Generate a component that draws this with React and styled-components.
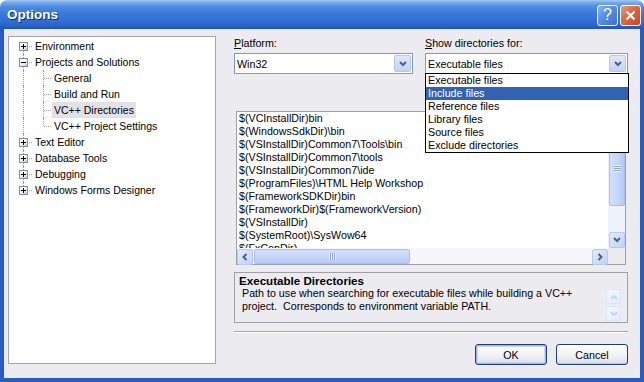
import React from 'react';
import styled, { createGlobalStyle } from 'styled-components';

const GlobalStyle = createGlobalStyle`
  body {
    margin: 0;
    background: #ffffff;
    font-family: "Liberation Sans", Arial, sans-serif;
    font-size: 10.7px;
    color: #000;
  }
`;

const dialogBg = '#ECEBF0';

// window frame
const Window = styled.div`
  width: 644px;
  height: 382px;
  display: flex;
  flex-direction: column;
  border-radius: 7px 7px 0 0;
  overflow: hidden;
`;

const TitleBar = styled.div`
  height: 29px;
  flex: none;
  display: flex;
  align-items: center;
  padding: 0 3px 0 7px;
  background: linear-gradient(
    #a6c8f3 0%,
    #79acec 8%,
    #4f8ee2 22%,
    #3a7ad9 45%,
    #3170d4 70%,
    #2a63c9 88%,
    #2252b6 100%
  );
`;

const Title = styled.div`
  flex: 1;
  color: #fff;
  font-weight: bold;
  font-size: 13.5px;
  text-shadow: 1px 1px 0 #0c2a7a;
`;

const CapButtons = styled.div`
  display: flex;
  gap: 2px;
  margin-top: 1px;
`;

const CapButton = styled.div`
  width: 21px;
  height: 21px;
  box-sizing: border-box;
  border: 1px solid #fff;
  border-radius: 3px;
  display: flex;
  align-items: center;
  justify-content: center;
  color: #fff;
  font-size: 16px;
  background: ${(p) =>
    p.$kind === 'close'
      ? 'linear-gradient(135deg, #ee9a7c 0%, #e06a43 40%, #c9461f 100%)'
      : 'linear-gradient(135deg, #8cb6f2 0%, #5a90e6 40%, #3a6fd6 100%)'};
`;

const Frame = styled.div`
  flex: 1;
  display: flex;
  border: 4px solid #2a5bc4;
  border-top: 0;
  box-shadow: inset 1px 0 0 #5d8be0, inset -1px 0 0 #5d8be0;
`;

const Client = styled.div`
  flex: 1;
  display: flex;
  align-items: flex-start;
  background: ${dialogBg};
  padding: 7px 12px 0 4px;
`;

// tree
const TreePanel = styled.div`
  width: 208px;
  height: 328px;
  box-sizing: border-box;
  border: 1px solid #a5a5a8;
  background: #fff;
  padding: 1px 0 0 5px;
  font-size: 10.5px;
`;

const TreeRow = styled.div`
  display: flex;
  align-items: center;
  height: 16px;
`;

const Gutter = styled.span`
  position: relative;
  flex: none;
  width: 19px;
  height: 16px;
  &::before {
    content: '';
    position: absolute;
    left: ${(p) => p.$x}px;
    top: ${(p) => p.$from}px;
    bottom: ${(p) => p.$to}px;
    border-left: 1px dotted #a0a0a0;
  }
  &::after {
    content: '';
    display: ${(p) => (p.$branch ? 'block' : 'none')};
    position: absolute;
    left: ${(p) => p.$x + 1}px;
    right: 1px;
    top: 8px;
    border-top: 1px dotted #a0a0a0;
  }
`;

const Expander = styled.span`
  position: absolute;
  left: 5px;
  top: 4px;
  width: 9px;
  height: 9px;
  box-sizing: border-box;
  border: 1px solid #7a8ea6;
  background: linear-gradient(135deg, #ffffff 35%, #cfcbc2 100%);
  z-index: 1;
  &::before {
    content: '';
    position: absolute;
    left: 1px;
    top: 3px;
    width: 5px;
    height: 1px;
    background: #000;
  }
  &::after {
    content: '';
    display: ${(p) => (p.$open ? 'none' : 'block')};
    position: absolute;
    left: 3px;
    top: 1px;
    width: 1px;
    height: 5px;
    background: #000;
  }
`;

const TreeLabel = styled.span`
  height: 16px;
  line-height: 16px;
  padding: 0 2px;
  white-space: nowrap;
  background: ${(p) => (p.$selected ? '#e2e1e6' : 'transparent')};
`;

// right side
const Main = styled.div`
  width: 394px;
  margin-left: 18px;
  display: flex;
  flex-direction: column;
  padding-top: 1px;
`;

const ComboRow = styled.div`
  display: flex;
  gap: 12px;
`;

const Field = styled.div`
  width: ${(p) => p.$w}px;
  display: flex;
  flex-direction: column;
`;

const Label = styled.div`
  height: 13px;
  line-height: 13px;
  margin-bottom: 3px;
`;

const Combo = styled.div`
  position: relative;
  height: 21px;
  box-sizing: border-box;
  border: 1px solid #7f9db9;
  background: #fff;
  display: flex;
  align-items: center;
`;

const ComboText = styled.div`
  flex: 1;
  padding-left: 2px;
`;

const DropButton = styled.div`
  width: 17px;
  height: 17px;
  margin: 1px;
  box-sizing: border-box;
  border: 1px solid #b4c7f1;
  border-radius: 2px;
  background: linear-gradient(#dfe8fd, #c3d3f8);
  display: flex;
  align-items: center;
  justify-content: center;
`;

const DropList = styled.div`
  position: absolute;
  top: 19px;
  left: -1px;
  right: -2px;
  border: 1px solid #000;
  background: #fff;
  z-index: 5;
`;

const DropItem = styled.div`
  height: 13px;
  line-height: 13px;
  padding-left: 2px;
  background: ${(p) => (p.$active ? '#3163b3' : 'transparent')};
  color: ${(p) => (p.$active ? '#fff' : '#000')};
`;

const DirList = styled.div`
  margin: 37px 2px 0;
  height: 154px;
  box-sizing: border-box;
  border: 1px solid #a0a0a4;
  background: #fff;
  display: grid;
  grid-template-columns: 1fr 17px;
  grid-template-rows: 1fr 16px;
`;

const DirLines = styled.div`
  overflow: hidden;
  padding-left: 2px;
  white-space: nowrap;
`;

const DirLine = styled.div`
  height: 13px;
  line-height: 13px;
`;

const VScroll = styled.div`
  display: flex;
  flex-direction: column;
  background: #eef2fb;
  padding-left: 1px;
`;

const HScroll = styled.div`
  display: flex;
  background: #f6f7fc;
  padding-top: 1px;
`;

const Corner = styled.div`
  background: ${dialogBg};
`;

const ArrowButton = styled.div`
  flex: none;
  width: 16px;
  height: 16px;
  box-sizing: border-box;
  border: 1px solid #b7c9f0;
  border-radius: 2px;
  background: linear-gradient(135deg, #e4ecfd, #c0d1f7);
  display: flex;
  align-items: center;
  justify-content: center;
`;

const Thumb = styled.div`
  flex: none;
  box-sizing: border-box;
  border: 1px solid #a9bfee;
  border-radius: 2px;
  display: flex;
  align-items: center;
  justify-content: center;
  ${(p) =>
    p.$vertical
      ? `width: 16px; height: 76px; margin-top: 2px;
         background: linear-gradient(90deg, #d4e0fc, #c4d4fa 60%, #b5c8f5);`
      : `width: 156px; height: 15px; margin-left: 1px;
         background: linear-gradient(#d4e0fc, #c4d4fa 60%, #b5c8f5);`}
`;

const Grip = styled.span`
  display: block;
  ${(p) =>
    p.$vertical
      ? `width: 7px; height: 7px;
         background: repeating-linear-gradient(#eef3ff 0 1px, #8fa8dc 1px 2px);`
      : `width: 7px; height: 7px;
         background: repeating-linear-gradient(90deg, #eef3ff 0 1px, #8fa8dc 1px 2px);`}
`;

const Track = styled.div`
  flex: 1;
`;

const DescBox = styled.div`
  margin-top: 7px;
  height: 51px;
  box-sizing: border-box;
  border: 1px solid #a0a0a4;
  padding: 1px 6px 0 4px;
  display: flex;
  flex-direction: column;
`;

const DescTitle = styled.div`
  font-weight: bold;
  font-size: 11.6px;
  height: 13px;
  line-height: 13px;
`;

const DescBody = styled.div`
  display: flex;
`;

const DescText = styled.div`
  flex: 1;
  margin-left: 3px;
  line-height: 13px;
  white-space: pre;
`;

const Spinner = styled.div`
  display: flex;
  flex-direction: column;
  gap: 2px;
  margin-top: 2px;
`;

const SpinButton = styled.div`
  width: 15px;
  height: 15px;
  box-sizing: border-box;
  border: 1px solid #dde6f7;
  border-radius: 2px;
  background: linear-gradient(135deg, #f4f7fe, #e3eafa);
  display: flex;
  align-items: center;
  justify-content: center;
`;

const Separator = styled.div`
  margin-top: 8px;
  border-top: 1px solid #aca899;
  border-bottom: 1px solid #fff;
`;

const ButtonRow = styled.div`
  margin-top: 11px;
  display: flex;
  justify-content: flex-end;
  gap: 9px;
`;

const Button = styled.div`
  width: 72px;
  height: 21px;
  box-sizing: border-box;
  border: 1px solid #1f3d78;
  border-radius: 3px;
  background: linear-gradient(#ffffff 0%, #f3f3f6 50%, #e3e4ec 85%, #d3d6e4 100%);
  box-shadow: ${(p) =>
    p.$default
      ? 'inset 0 0 0 1px #9cb7ec, inset 0 0 0 2px #c6d6f6'
      : 'inset 0 -1px 0 #c6c8d6'};
  display: flex;
  align-items: center;
  justify-content: center;
`;

// icons
const Chevron = ({ dir = 'down', color = '#4d6185', size = 8 }) => {
  const paths = {
    down: 'M1 2 L4 5 L7 2',
    up: 'M1 6 L4 3 L7 6',
    left: 'M5.5 1 L2.5 4 L5.5 7',
    right: 'M2.5 1 L5.5 4 L2.5 7',
  };
  return (
    <svg width={size} height={size} viewBox="0 0 8 8">
      <path d={paths[dir]} fill="none" stroke={color} strokeWidth="2" />
    </svg>
  );
};

const CloseGlyph = () => (
  <svg width="11" height="11" viewBox="0 0 11 11">
    <path d="M1.5 1.5 L9.5 9.5 M9.5 1.5 L1.5 9.5" stroke="#fff" strokeWidth="2.2" />
  </svg>
);

const tree = [
  { label: 'Environment', depth: 0, toggle: 'closed' },
  { label: 'Projects and Solutions', depth: 0, toggle: 'open' },
  { label: 'General', depth: 1 },
  { label: 'Build and Run', depth: 1 },
  { label: 'VC++ Directories', depth: 1, selected: true },
  { label: 'VC++ Project Settings', depth: 1, lastChild: true },
  { label: 'Text Editor', depth: 0, toggle: 'closed' },
  { label: 'Database Tools', depth: 0, toggle: 'closed' },
  { label: 'Debugging', depth: 0, toggle: 'closed' },
  { label: 'Windows Forms Designer', depth: 0, toggle: 'closed' },
];

const dirs = [
  '$(VCInstallDir)bin',
  '$(WindowsSdkDir)\\bin',
  '$(VSInstallDir)Common7\\Tools\\bin',
  '$(VSInstallDir)Common7\\tools',
  '$(VSInstallDir)Common7\\ide',
  '$(ProgramFiles)\\HTML Help Workshop',
  '$(FrameworkSDKDir)bin',
  '$(FrameworkDir)$(FrameworkVersion)',
  '$(VSInstallDir)',
  '$(SystemRoot)\\SysWow64',
  '$(FxCopDir)',
];

const dirKinds = [
  'Executable files',
  'Include files',
  'Reference files',
  'Library files',
  'Source files',
  'Exclude directories',
];

function TreeItem({ item, index }) {
  const first = index === 0;
  const last = index === tree.length - 1;
  if (item.depth === 0) {
    return (
      <TreeRow>
        <Gutter $x={9} $from={first ? 8 : 0} $to={last ? 8 : 0} $branch>
          <Expander $open={item.toggle === 'open'} />
        </Gutter>
        <TreeLabel>{item.label}</TreeLabel>
      </TreeRow>
    );
  }
  return (
    <TreeRow>
      <Gutter $x={9} $from={0} $to={0} />
      <Gutter $x={10} $from={0} $to={item.lastChild ? 8 : 0} $branch />
      <TreeLabel $selected={item.selected}>{item.label}</TreeLabel>
    </TreeRow>
  );
}

export default function App() {
  return (
    <>
      <GlobalStyle />
      <Window>
        <TitleBar>
          <Title>Options</Title>
          <CapButtons>
            <CapButton $kind="help">?</CapButton>
            <CapButton $kind="close">
              <CloseGlyph />
            </CapButton>
          </CapButtons>
        </TitleBar>

        <Frame>
          <Client>
            <TreePanel>
              {tree.map((item, i) => (
                <TreeItem key={item.label} item={item} index={i} />
              ))}
            </TreePanel>

            <Main>
              <ComboRow>
                <Field $w={179}>
                  <Label>
                    <u>P</u>latform:
                  </Label>
                  <Combo>
                    <ComboText>Win32</ComboText>
                    <DropButton>
                      <Chevron dir="down" />
                    </DropButton>
                  </Combo>
                </Field>
                <Field $w={203}>
                  <Label>
                    <u>S</u>how directories for:
                  </Label>
                  <Combo>
                    <ComboText>Executable files</ComboText>
                    <DropButton>
                      <Chevron dir="down" />
                    </DropButton>
                    <DropList>
                      {dirKinds.map((k) => (
                        <DropItem key={k} $active={k === 'Include files'}>
                          {k}
                        </DropItem>
                      ))}
                    </DropList>
                  </Combo>
                </Field>
              </ComboRow>

              <DirList>
                <DirLines>
                  {dirs.map((d) => (
                    <DirLine key={d}>{d}</DirLine>
                  ))}
                </DirLines>
                <VScroll>
                  <ArrowButton>
                    <Chevron dir="up" />
                  </ArrowButton>
                  <Thumb $vertical>
                    <Grip $vertical />
                  </Thumb>
                  <Track />
                  <ArrowButton>
                    <Chevron dir="down" />
                  </ArrowButton>
                </VScroll>
                <HScroll>
                  <ArrowButton>
                    <Chevron dir="left" />
                  </ArrowButton>
                  <Thumb>
                    <Grip />
                  </Thumb>
                  <Track />
                  <ArrowButton>
                    <Chevron dir="right" />
                  </ArrowButton>
                </HScroll>
                <Corner />
              </DirList>

              <DescBox>
                <DescTitle>Executable Directories</DescTitle>
                <DescBody>
                  <DescText>
                    {'Path to use when searching for executable files while building a VC++\nproject.  Corresponds to environment variable PATH.'}
                  </DescText>
                  <Spinner>
                    <SpinButton>
                      <Chevron dir="up" color="#c9d5ee" />
                    </SpinButton>
                    <SpinButton>
                      <Chevron dir="down" color="#c9d5ee" />
                    </SpinButton>
                  </Spinner>
                </DescBody>
              </DescBox>

              <Separator />

              <ButtonRow>
                <Button $default>OK</Button>
                <Button>Cancel</Button>
              </ButtonRow>
            </Main>
          </Client>
        </Frame>
      </Window>
    </>
  );
}
